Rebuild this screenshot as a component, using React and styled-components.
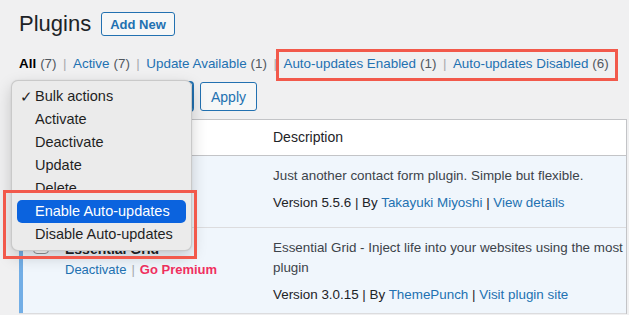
import React from "react";
import styled, { createGlobalStyle } from "styled-components";

const Global = createGlobalStyle`
  html, body { margin: 0; padding: 0; background: #f0f0f1; }
  body {
    font-family: "Liberation Sans", Arial, sans-serif;
    font-size: 13.4px;
    color: #3c434a;
    overflow: hidden;
  }
`;

const Wrap = styled.div`
  position: relative;
  padding: 9px 2px 0 19px;
  width: 629px;
  box-sizing: border-box;
`;

const Header = styled.div`
  display: flex;
  align-items: center;
  gap: 10px;
  height: 30px;
`;

const Title = styled.h1`
  margin: 0;
  font-size: 22px;
  font-weight: 400;
  line-height: 30px;
  color: #1d2327;
`;

const OutlineButton = styled.button`
  font-family: inherit;
  font-size: ${(p) => p.$fs || 13}px;
  font-weight: ${(p) => (p.$bold ? 600 : 400)};
  color: #2271b1;
  background: #f6f7f7;
  border: 1px solid #2271b1;
  border-radius: 3px;
  height: ${(p) => p.$h || 24}px;
  padding: 0 ${(p) => p.$px || 9}px;
  margin: 0;
  cursor: pointer;
`;

const Filters = styled.ul`
  display: flex;
  align-items: center;
  list-style: none;
  margin: 15px 0 0;
  padding: 0;
  line-height: 20px;
  white-space: nowrap;
`;

const FilterItem = styled.li`
  display: flex;
  align-items: center;
`;

const Highlight = styled.span`
  position: relative;
  display: flex;
  align-items: center;
  &::after {
    content: "";
    position: absolute;
    left: -7px;
    right: -9px;
    top: -5px;
    bottom: -7px;
    border: 3px solid #f2594b;
    pointer-events: none;
  }
`;

const FLink = styled.a`
  color: ${(p) => (p.$current ? "#000" : "#2271b1")};
  font-weight: ${(p) => (p.$current ? 600 : 400)};
  text-decoration: none;
`;

const Count = styled.span`
  color: #50575e;
  margin-left: 4px;
`;

const Sep = styled.span`
  color: #a7aaad;
  margin: 0 6.5px;
`;

const Tablenav = styled.div`
  position: relative;
  display: flex;
  align-items: center;
  gap: 7px;
  margin-top: 8px;
  height: 29px;
`;

const Select = styled.div`
  box-sizing: border-box;
  width: 174px;
  height: 29px;
  border: 1px solid #2271b1;
  box-shadow: 0 0 0 1px #2271b1;
  border-radius: 3px;
  background: #fff;
  padding: 0 8px;
  display: flex;
  align-items: center;
  color: #2c3338;
  font-size: 14px;
`;

const Menu = styled.div`
  position: absolute;
  left: -8px;
  top: -2px;
  width: 181px;
  box-sizing: border-box;
  padding: 4px 5px;
  background: #ebebeb;
  border: 1px solid rgba(0, 0, 0, 0.14);
  border-radius: 7px;
  box-shadow: 0 6px 16px rgba(0, 0, 0, 0.18), 0 0 2px rgba(0, 0, 0, 0.08);
  z-index: 5;
  font-size: 14.5px;
  color: #1f1f1f;
`;

const MenuItem = styled.div`
  position: relative;
  height: 23px;
  line-height: 23px;
  padding-left: 18px;
  border-radius: 5px;
  background: ${(p) => (p.$active ? "#0b63de" : "transparent")};
  color: ${(p) => (p.$active ? "#fff" : "#1f1f1f")};
  white-space: nowrap;
`;

const Check = styled.span`
  position: absolute;
  left: 3px;
  top: 0;
  font-size: 15px;
`;

const MenuGroup = styled.div`
  position: relative;
  &::after {
    content: "";
    position: absolute;
    left: -14px;
    right: -11px;
    top: -10px;
    bottom: -13px;
    border: 3px solid #f2594b;
    pointer-events: none;
  }
`;

const Table = styled.div`
  margin-top: 8px;
  border-top: 1px solid #c3c4c7;
  border-right: 1px solid #c3c4c7;
  width: 608px;
  box-sizing: border-box;
  overflow: hidden;
`;

const Row = styled.div`
  display: grid;
  grid-template-columns: 36px 208px 1fr;
  background: ${(p) => (p.$head ? "#fff" : "#f0f6fc")};
  border-bottom: 1px solid ${(p) => (p.$head ? "#c3c4c7" : "#dcdcde")};
`;

const CheckCell = styled.div`
  box-sizing: border-box;
  border-left: 4px solid ${(p) => (p.$active ? "#72aee6" : "transparent")};
  padding: 10px 0 0 10px;
`;

const Box = styled.div`
  width: 16px;
  height: 16px;
  box-sizing: border-box;
  border: 1px solid #8c8f94;
  border-radius: 4px;
  background: #fff;
  display: flex;
  align-items: center;
  justify-content: center;
`;

const HeadCell = styled.div`
  padding: 8px 10px;
  line-height: 19px;
  font-size: 14px;
  color: #1d2327;
`;

const NameCell = styled.div`
  padding: 11px 10px 19px;
`;

const PluginName = styled.strong`
  display: block;
  font-size: 14px;
  line-height: 20px;
  color: #1d2327;
  font-weight: 600;
`;

const Actions = styled.div`
  margin-top: 1px;
  line-height: 20px;
  font-size: 13px;
  white-space: nowrap;
`;

const ActionLink = styled.a`
  color: ${(p) => p.$color || "#2271b1"};
  font-weight: ${(p) => (p.$bold ? 700 : 400)};
  text-decoration: none;
`;

const ActionSep = styled.span`
  color: #a7aaad;
  margin: 0 5px;
`;

const DescCell = styled.div`
  padding: 10px 10px 8px;
  min-width: 0;
`;

const Desc = styled.p`
  margin: 0;
  line-height: 20px;
  color: #3c434a;
  width: 560px;
`;

const Version = styled.div`
  margin-top: 7px;
  line-height: 20px;
  color: #1d2327;
  white-space: nowrap;
`;

const filters = [
  { label: "All", count: 7, current: true },
  { label: "Active", count: 7 },
  { label: "Update Available", count: 1 },
];

const menuItems = ["Activate", "Deactivate", "Update", "Delete"];

const plugins = [
  {
    name: "Contact Form 7",
    actions: [{ label: "Settings" }, { label: "Deactivate" }],
    desc: "Just another contact form plugin. Simple but flexible.",
    version: "5.5.6",
    author: "Takayuki Miyoshi",
    link: "View details",
    checked: false,
  },
  {
    name: "Essential Grid",
    actions: [{ label: "Deactivate" }, { label: "Go Premium", color: "#f0305f", bold: true }],
    desc: "Essential Grid - Inject life into your websites using the most impressive WordPress gallery plugin",
    version: "3.0.15",
    author: "ThemePunch",
    link: "Visit plugin site",
    checked: true,
  },
];

export default function App() {
  return (
    <>
      <Global />
      <Wrap>
        <Header>
          <Title>Plugins</Title>
          <OutlineButton $bold $px={8}>Add New</OutlineButton>
        </Header>

        <Filters>
          {filters.map((f, i) => (
            <FilterItem key={f.label}>
              {i > 0 && <Sep>|</Sep>}
              <FLink $current={f.current}>{f.label}</FLink>
              <Count>({f.count})</Count>
            </FilterItem>
          ))}
          <FilterItem>
            <Sep>|</Sep>
            <Highlight>
              <FLink>Auto-updates Enabled</FLink>
              <Count>(1)</Count>
              <Sep>|</Sep>
              <FLink>Auto-updates Disabled</FLink>
              <Count>(6)</Count>
            </Highlight>
          </FilterItem>
        </Filters>

        <Tablenav>
          <Select>Bulk actions</Select>
          <OutlineButton $h={29} $px={10} $fs={14}>Apply</OutlineButton>
          <Menu>
            <MenuItem>
              <Check>✓</Check>Bulk actions
            </MenuItem>
            {menuItems.map((m) => (
              <MenuItem key={m}>{m}</MenuItem>
            ))}
            <MenuGroup>
              <MenuItem $active>Enable Auto-updates</MenuItem>
              <MenuItem>Disable Auto-updates</MenuItem>
            </MenuGroup>
          </Menu>
        </Tablenav>

        <Table>
          <Row $head>
            <CheckCell />
            <HeadCell>Plugin</HeadCell>
            <HeadCell>Description</HeadCell>
          </Row>
          {plugins.map((p) => (
            <Row key={p.name}>
              <CheckCell $active>
                <Box>
                  {p.checked && (
                    <svg width="12" height="12" viewBox="0 0 12 12">
                      <path d="M2.5 6.2 L5 8.7 L9.6 3.4" stroke="#2271b1" strokeWidth="2" fill="none" />
                    </svg>
                  )}
                </Box>
              </CheckCell>
              <NameCell>
                <PluginName>{p.name}</PluginName>
                <Actions>
                  {p.actions.map((a, i) => (
                    <React.Fragment key={a.label}>
                      {i > 0 && <ActionSep>|</ActionSep>}
                      <ActionLink $color={a.color} $bold={a.bold}>{a.label}</ActionLink>
                    </React.Fragment>
                  ))}
                </Actions>
              </NameCell>
              <DescCell>
                <Desc>{p.desc}</Desc>
                <Version>
                  Version {p.version} | By <ActionLink>{p.author}</ActionLink> | <ActionLink>{p.link}</ActionLink>
                </Version>
              </DescCell>
            </Row>
          ))}
        </Table>
      </Wrap>
    </>
  );
}
